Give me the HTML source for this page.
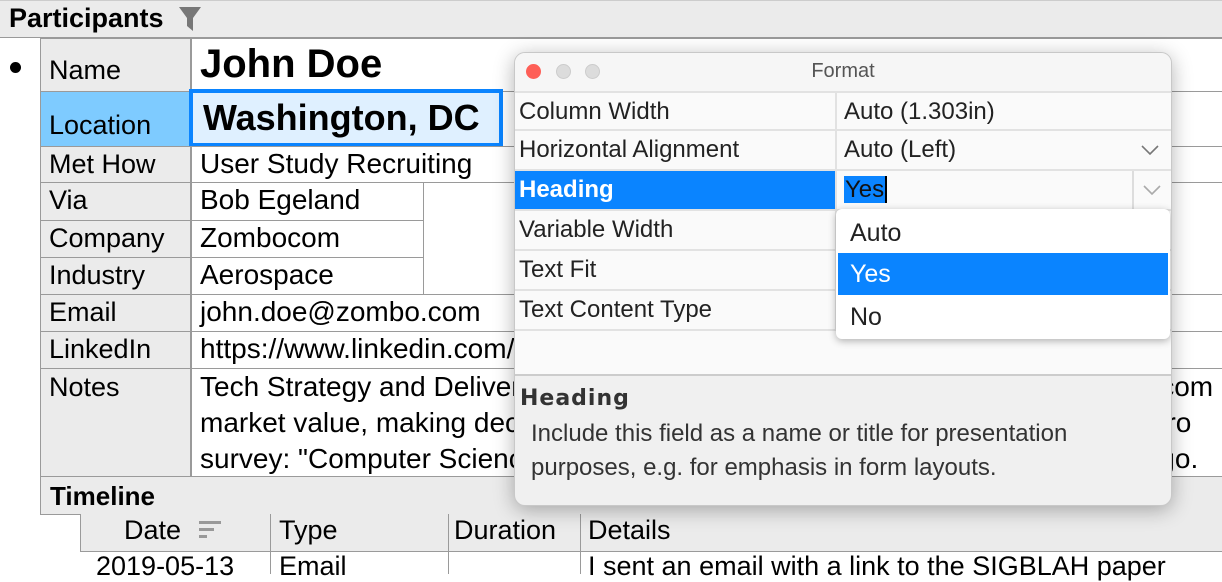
<!DOCTYPE html>
<html><head><meta charset="utf-8"><style>
*{box-sizing:border-box;margin:0;padding:0}
body{width:1222px;height:574px;overflow:hidden;background:#fff;font-family:"Liberation Sans",sans-serif;color:#000;position:relative}
.a{position:absolute}
.hd{background:#ebebeb}
.lb{position:absolute;left:40px;width:151px;background:#ebebeb;border:1px solid #9a9a9a;font-size:27px;padding-left:8px;line-height:34px}
.v{position:absolute;left:191px;border:1px solid #9a9a9a;font-size:28px;padding-left:8px;line-height:34px;white-space:nowrap;overflow:hidden}
.dlg{position:absolute;left:514px;top:52px;width:658px;height:454px;border-radius:11px;background:#f0f0f0;box-shadow:0 4px 20px rgba(0,0,0,.3);border:1px solid #c8c8c8;overflow:hidden;font-size:24px;color:#222}
.r{position:absolute;left:0;width:656px;height:40px;border-bottom:2px solid #e2e2e2;background:#fafafa}
.r .k{position:absolute;left:4px;top:5px}
.r .val{position:absolute;left:320px;top:0;height:38px;border-left:2px solid #e2e2e2;padding:5px 0 0 7px;width:336px}
</style></head><body>
<div class="a hd" style="left:0;top:0;width:1222px;height:38px;border-bottom:1px solid #9a9a9a;border-top:1px solid #ccc"></div>
<div class="a" style="left:9px;top:3px;font-size:27px;font-weight:bold">Participants</div>
<svg class="a" style="left:178px;top:6px" width="24" height="26"><path d="M1 1H23L15 12V25L9 20V12Z" fill="#777"/></svg>
<div class="a" style="left:10px;top:62px;width:11px;height:11px;border-radius:50%;background:#000"></div>

<div class="lb" style="top:38px;height:54px;padding-top:14px">Name</div>
<div class="v" style="top:38px;width:1040px;height:54px;border-right:none;font-weight:bold;font-size:40px;line-height:50px">John Doe</div>
<div class="lb" style="top:91px;height:56px;padding-top:16px;background:#7ecbff">Location</div>
<div class="v" style="top:91px;width:1040px;height:56px;border-right:none"></div>
<div class="a" style="left:189px;top:89px;width:314px;height:58px;border:4px solid #0a84ff;background:#dff0ff;font-weight:bold;font-size:36px;padding-left:10px;line-height:50px;white-space:nowrap">Washington, DC</div>
<div class="lb" style="top:146px;height:37px">Met How</div>
<div class="v" style="top:146px;width:1040px;height:37px;border-right:none">User Study Recruiting</div>
<div class="lb" style="top:182px;height:39px">Via</div>
<div class="v" style="top:182px;width:233px;height:39px">Bob Egeland</div>
<div class="lb" style="top:220px;height:38px">Company</div>
<div class="v" style="top:220px;width:233px;height:38px">Zombocom</div>
<div class="lb" style="top:257px;height:38px">Industry</div>
<div class="v" style="top:257px;width:233px;height:38px">Aerospace</div>
<div class="lb" style="top:294px;height:38px">Email</div>
<div class="v" style="top:294px;width:1040px;height:38px;border-right:none">john.doe@zombo.com</div>
<div class="lb" style="top:331px;height:38px">LinkedIn</div>
<div class="v" style="top:331px;width:1040px;height:38px;border-right:none">https://www.linkedin.com/in/johndoe</div>
<div class="lb" style="top:368px;height:109px;padding-top:1px">Notes</div>
<div class="v" style="top:368px;width:1040px;height:109px;border-right:none;line-height:36px;padding-top:0">Tech Strategy and Delivery lead, formerly at a big firm: was at the forefront of com<br>market value, making decisions on which technology investments to pursue. Fro<br>survey: "Computer Science students learned about this in class many years ago.</div>
<div class="a hd" style="left:40px;top:476px;width:1190px;height:39px;border:1px solid #9a9a9a;font-size:26px;font-weight:bold;padding-left:9px;line-height:38px">Timeline</div>
<div class="a hd" style="left:80px;top:514px;width:1150px;height:38px;border-left:1px solid #9a9a9a;border-bottom:1px solid #9a9a9a"></div>
<div class="a" style="left:124px;top:515px;font-size:27px">Date</div>
<svg class="a" style="left:199px;top:520px" width="22" height="20"><rect x="0" y="1" width="22" height="3" fill="#999"/><rect x="0" y="8" width="15" height="3" fill="#999"/><rect x="0" y="15" width="8" height="3" fill="#999"/></svg>
<div class="a" style="left:270px;top:514px;width:1px;height:60px;background:#9a9a9a"></div>
<div class="a" style="left:279px;top:515px;font-size:27px">Type</div>
<div class="a" style="left:448px;top:514px;width:1px;height:60px;background:#9a9a9a"></div>
<div class="a" style="left:454px;top:515px;font-size:27px">Duration</div>
<div class="a" style="left:580px;top:514px;width:1px;height:60px;background:#9a9a9a"></div>
<div class="a" style="left:588px;top:515px;font-size:27px">Details</div>
<div class="a" style="left:96px;top:551px;font-size:27px">2019-05-13</div>
<div class="a" style="left:279px;top:551px;font-size:27px">Email</div>
<div class="a" style="left:588px;top:551px;font-size:27px;white-space:nowrap">I sent an email with a link to the SIGBLAH paper</div>

<div class="dlg">
 <div class="a" style="left:0;top:0;width:658px;height:38px;background:#f6f6f6"></div>
 <div class="a" style="left:11px;top:11px;width:15px;height:15px;border-radius:50%;background:#fe5f57"></div>
 <div class="a" style="left:41px;top:11px;width:15px;height:15px;border-radius:50%;background:#dcdcdc;border:1px solid #ccc"></div>
 <div class="a" style="left:70px;top:11px;width:15px;height:15px;border-radius:50%;background:#dcdcdc;border:1px solid #ccc"></div>
 <div class="a" style="left:0;top:7px;width:656px;text-align:center;font-size:20px;color:#555">Format</div>
 <div class="r" style="top:38px;border-top:2px solid #e2e2e2"><span class="k">Column Width</span><div class="val">Auto (1.303in)</div></div>
 <div class="r" style="top:78px"><span class="k">Horizontal Alignment</span><div class="val">Auto (Left)</div>
  <svg class="a" style="left:625px;top:12px" width="20" height="14"><path d="M2 3L10 11L18 3" stroke="#777" stroke-width="1.6" fill="none"/></svg></div>
 <div class="r" style="top:118px"><div class="a" style="left:0;top:0;width:320px;height:38px;background:#0a84ff"></div><span class="k" style="color:#fff;font-weight:bold">Heading</span>
  <div class="val"><span style="background:#0a84ff;color:#111;border-right:2px solid #000;padding:0 1px">Yes</span></div>
  <div class="a" style="left:617px;top:0;width:2px;height:38px;background:#ddd"></div>
  <svg class="a" style="left:627px;top:12px" width="20" height="14"><path d="M2 3L10 11L18 3" stroke="#aaa" stroke-width="1.6" fill="none"/></svg></div>
 <div class="r" style="top:158px"><span class="k">Variable Width</span></div>
 <div class="r" style="top:198px"><span class="k">Text Fit</span></div>
 <div class="r" style="top:238px"><span class="k">Text Content Type</span></div>
 <div class="a" style="left:0;top:278px;width:656px;height:45px;background:#fafafa;border-bottom:2px solid #ccc"></div>
 <div class="a" style="left:320px;top:38px;width:2px;height:240px;background:#e2e2e2"></div>
 <div class="a" style="left:5px;top:333px;font-weight:bold;letter-spacing:1px;color:#333;font-family:'DejaVu Sans',sans-serif;font-size:22px">Heading</div>
 <div class="a" style="left:16px;top:364px;font-size:24px;color:#333;line-height:34px;white-space:nowrap">Include this field as a name or title for presentation<br>purposes, e.g. for emphasis in form layouts.</div>
 <div class="a" style="left:321px;top:156px;width:334px;height:130px;background:#fff;border-radius:6px;box-shadow:0 2px 8px rgba(0,0,0,.3);font-size:25px">
  <div style="position:absolute;left:14px;top:10px">Auto</div>
  <div style="position:absolute;left:2px;top:44px;width:330px;height:42px;background:#0a84ff;color:#fff;padding:7px 0 0 12px">Yes</div>
  <div style="position:absolute;left:14px;top:94px">No</div>
 </div>
</div>
</body></html>
